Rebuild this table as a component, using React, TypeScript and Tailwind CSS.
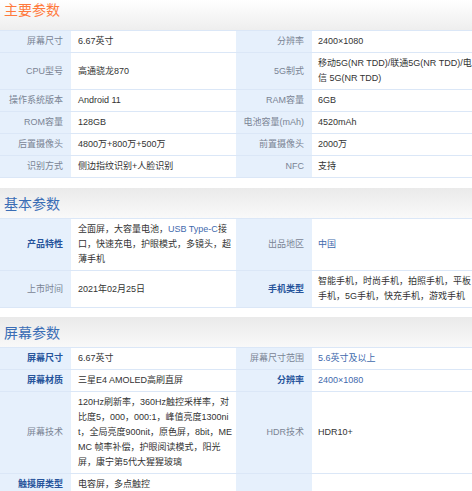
import React from "react";

type Cell = {
  label: string;
  bold?: boolean;
  value: React.ReactNode;
  link?: boolean;
};

type Row = [Cell, Cell | null];

const lines = (...ls: React.ReactNode[]) => (
  <span className="block whitespace-nowrap">
    {ls.map((l, i) => (
      <span key={i} className="block">
        {l}
      </span>
    ))}
  </span>
);

const Label = ({ c }: { c: Cell | null }) => (
  <div
    className={`flex items-center justify-end pr-[8px] py-[3px] bg-[#e6f0fc] leading-[15px] whitespace-nowrap ${
      c?.bold ? "font-bold text-[#27549b]" : "text-[#7a8494]"
    }`}
  >
    {c?.label}
  </div>
);

const Value = ({ c, pl }: { c: Cell | null; pl: string }) => (
  <div
    className={`flex items-center ${pl} pr-[2px] py-[3px] bg-white leading-[15px] whitespace-nowrap ${
      c?.link ? "text-[#3f6aad]" : "text-[#333333]"
    }`}
  >
    {c?.value}
  </div>
);

const Table = ({ rows }: { rows: Row[] }) => (
  <div className="grid grid-cols-[71px_165px_76px_160px] gap-y-px py-px bg-[#dbe7f7] text-[9px]">
    {rows.map(([a, b], i) => (
      <React.Fragment key={i}>
        <Label c={a} />
        <Value c={a} pl="pl-[7px]" />
        <Label c={b} />
        <Value c={b} pl="pl-[6px]" />
      </React.Fragment>
    ))}
  </div>
);

const Header = ({
  title,
  first,
  color,
}: {
  title: string;
  first?: boolean;
  color: string;
}) => (
  <div
    className={`h-[30px] flex pl-[4px] bg-gradient-to-b ${
      first
        ? "items-start from-[#ffffff] to-[#eeeeee]"
        : "items-center from-[#eaeaea] to-[#f9f9f9]"
    }`}
  >
    <span
      className={`text-[14px] leading-[18px] font-['Noto_Sans_CJK_SC',sans-serif] ${color}`}
    >
      {title}
    </span>
  </div>
);

export default function App() {
  const main: Row[] = [
    [
      { label: "屏幕尺寸", value: "6.67英寸" },
      { label: "分辨率", value: "2400×1080" },
    ],
    [
      { label: "CPU型号", value: "高通骁龙870" },
      {
        label: "5G制式",
        value: lines("移动5G(NR TDD)/联通5G(NR TDD)/电", "信 5G(NR TDD)"),
      },
    ],
    [
      { label: "操作系统版本", value: "Android 11" },
      { label: "RAM容量", value: "6GB" },
    ],
    [
      { label: "ROM容量", value: "128GB" },
      { label: "电池容量(mAh)", value: "4520mAh" },
    ],
    [
      { label: "后置摄像头", value: "4800万+800万+500万" },
      { label: "前置摄像头", value: "2000万" },
    ],
    [
      { label: "识别方式", value: "侧边指纹识别+人脸识别" },
      { label: "NFC", value: "支持" },
    ],
  ];

  const basic: Row[] = [
    [
      {
        label: "产品特性",
        bold: true,
        value: lines(
          <>
            全面屏，大容量电池，<span className="text-[#3f6aad]">USB Type-C</span>接
          </>,
          "口，快速充电，护眼模式，多镜头，超",
          "薄手机"
        ),
      },
      { label: "出品地区", value: "中国", link: true },
    ],
    [
      { label: "上市时间", value: "2021年02月25日" },
      {
        label: "手机类型",
        bold: true,
        value: lines("智能手机，时尚手机，拍照手机，平板", "手机，5G手机，快充手机，游戏手机"),
      },
    ],
  ];

  const screen: Row[] = [
    [
      { label: "屏幕尺寸", bold: true, value: "6.67英寸" },
      { label: "屏幕尺寸范围", value: "5.6英寸及以上", link: true },
    ],
    [
      { label: "屏幕材质", bold: true, value: "三星E4 AMOLED高刷直屏" },
      { label: "分辨率", bold: true, value: "2400×1080", link: true },
    ],
    [
      {
        label: "屏幕技术",
        value: lines(
          "120Hz刷新率，360Hz触控采样率，对",
          "比度5，000，000:1，峰值亮度1300ni",
          "t，全局亮度900nit，原色屏，8bit，ME",
          "MC 帧率补偿，护眼阅读模式，阳光",
          "屏，康宁第5代大猩猩玻璃"
        ),
      },
      { label: "HDR技术", value: "HDR10+" },
    ],
    [
      { label: "触摸屏类型", bold: true, value: "电容屏，多点触控" },
      null,
    ],
  ];

  return (
    <div className="w-[472px] h-[491px] overflow-hidden bg-white font-['Liberation_Sans','Noto_Sans_CJK_SC',sans-serif]">
      <Header title="主要参数" first color="text-[#ff7a3d]" />
      <Table rows={main} />
      <div className="mt-[10px]">
        <Header title="基本参数" color="text-[#3a6db5]" />
        <Table rows={basic} />
      </div>
      <div className="mt-[9px]">
        <Header title="屏幕参数" color="text-[#3a6db5]" />
        <Table rows={screen} />
      </div>
    </div>
  );
}
